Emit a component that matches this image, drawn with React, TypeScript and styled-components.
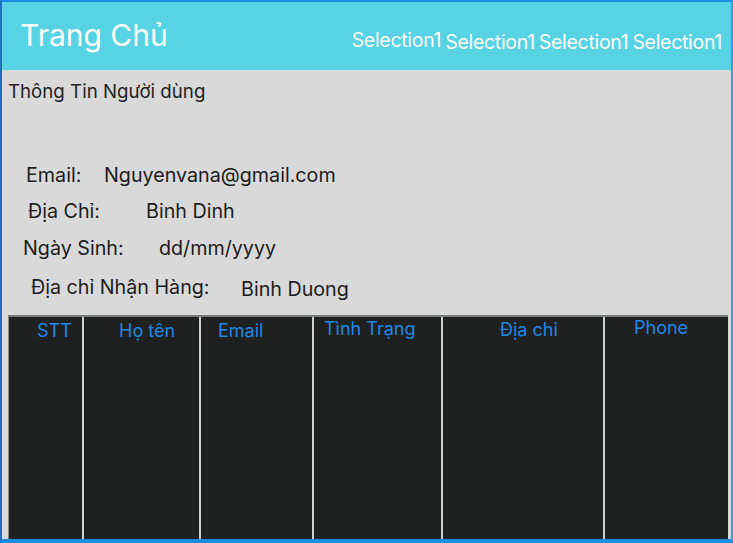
import React from "react";
import styled, { createGlobalStyle } from "styled-components";

const Global = createGlobalStyle`
  html, body { margin: 0; padding: 0; background: #ffffff; }
  body { font-family: Inter, "Noto Sans", sans-serif; }
  * { box-sizing: border-box; }
`;

const Frame = styled.div`
  width: 733px;
  height: 543px;
  display: flex;
  flex-direction: column;
  border-top: 2px solid #1a8ce4;
  border-left: 2px solid #1d6fc4;
  border-right: 2px solid #3a9be6;
  border-bottom: 4px solid #1a8ce4;
  background: #d9d9d9;
  overflow: hidden;
`;

const Header = styled.header`
  height: 68px;
  flex: none;
  background: #57d3e4;
  display: flex;
  align-items: center;
  justify-content: space-between;
  padding: 0 9px 0 18px;
`;

const Title = styled.h1`
  margin: 0 0 2px;
  font-size: 30px;
  font-weight: 400;
  color: #ffffff;
`;

const Nav = styled.nav`
  display: flex;
  align-items: center;
  gap: 4px;
  padding-top: 12px;
`;

const NavItem = styled.span<{ $raise?: number }>`
  font-size: 19.5px;
  color: #ffffff;
  position: relative;
  top: ${(p) => -(p.$raise ?? 0)}px;
  letter-spacing: -0.3px;
`;

const Body = styled.main`
  flex: 1;
  display: flex;
  flex-direction: column;
  padding: 10px 3px 0 6px;
`;

const Heading = styled.h2`
  margin: 0;
  font-size: 18.7px;
  font-weight: 400;
  color: #222222;
  line-height: 24px;
`;

const InfoList = styled.div`
  display: flex;
  flex-direction: column;
  margin-top: 53px;
`;

const InfoRow = styled.div<{ $indent: number; $label: number; $h: number }>`
  display: flex;
  align-items: center;
  height: ${(p) => p.$h}px;
  padding-left: ${(p) => p.$indent}px;
  font-size: 19.7px;
  color: #1c1c1c;
  span:first-child { width: ${(p) => p.$label}px; flex: none; }
`;

const Value = styled.span<{ $drop?: number }>`
  position: relative;
  top: ${(p) => p.$drop ?? 0}px;
`;

const Table = styled.div`
  margin-top: 8px;
  height: 224px;
  display: grid;
  grid-template-columns: 75px 117px 113px 129px 162px 124px;
  background: #1f2020;
  border-top: 2px solid #7a7a7a;
  border-left: 1px solid #8a8a8a;
`;

const Col = styled.div<{ $pad: number; $top: number; $last?: boolean }>`
  padding-left: ${(p) => p.$pad}px;
  padding-top: ${(p) => p.$top}px;
  border-right: ${(p) => (p.$last ? "none" : "2px solid #d0d0d0")};
  font-size: 18px;
  color: #1e88e5;
  line-height: 22px;
`;

const cols = [
  { t: "STT", pad: 28, top: 3 },
  { t: "Họ tên", pad: 35, top: 3 },
  { t: "Email", pad: 17, top: 3 },
  { t: "Tình Trạng", pad: 10, top: 1 },
  { t: "Địa chỉ", pad: 57, top: 2 },
  { t: "Phone", pad: 29, top: 0 },
];

export default function App() {
  return (
    <>
      <Global />
      <Frame>
        <Header>
          <Title>Trang Chủ</Title>
          <Nav>
            <NavItem $raise={2}>Selection1</NavItem>
            <NavItem>Selection1</NavItem>
            <NavItem>Selection1</NavItem>
            <NavItem>Selection1</NavItem>
          </Nav>
        </Header>
        <Body>
          <Heading>Thông Tin Người dùng</Heading>
          <InfoList>
            <InfoRow $indent={18} $label={78} $h={36}>
              <span>Email:</span>
              <Value>Nguyenvana@gmail.com</Value>
            </InfoRow>
            <InfoRow $indent={20} $label={118} $h={36}>
              <span>Địa Chỉ:</span>
              <Value>Binh Dinh</Value>
            </InfoRow>
            <InfoRow $indent={15} $label={136} $h={38}>
              <span>Ngày Sinh:</span>
              <Value>dd/mm/yyyy</Value>
            </InfoRow>
            <InfoRow $indent={23} $label={210} $h={40}>
              <span>Địa chỉ Nhận Hàng:</span>
              <Value $drop={2}>Binh Duong</Value>
            </InfoRow>
          </InfoList>
          <Table>
            {cols.map((c, i) => (
              <Col key={i} $pad={c.pad} $top={c.top} $last={i === cols.length - 1}>
                {c.t}
              </Col>
            ))}
          </Table>
        </Body>
      </Frame>
    </>
  );
}
